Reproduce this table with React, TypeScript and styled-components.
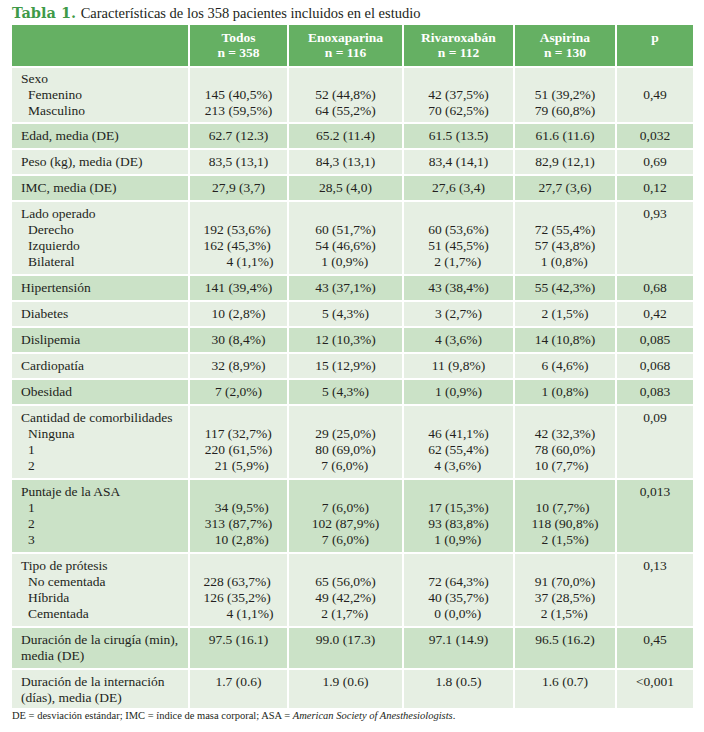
import React from 'react';
import styled, { createGlobalStyle } from 'styled-components';

const Global = createGlobalStyle`
  html, body { margin: 0; padding: 0; background: #ffffff; }
  body { font-family: "Liberation Serif", "Times New Roman", Tinos, "DejaVu Serif", serif; color: #231f20; }
`;

type Tone = 'light' | 'dark';
type VLine = [string, number?];

interface DataRow {
  label: string[];
  subs?: string[];
  tone: Tone;
  vals: VLine[][];
  p: string[];
  tight?: boolean;
}

const Page = styled.div`
  width: 704px;
  box-sizing: border-box;
  padding: 4px 0 0 12px;
  font-family: "Liberation Serif", "Times New Roman", Tinos, "DejaVu Serif", serif;
`;

const Caption = styled.div`
  font-size: 14.5px;
  line-height: 18px;
  margin-bottom: 3px;
  white-space: nowrap;
`;

const CaptionLabel = styled.span`
  color: #3f9a48;
  font-family: "DejaVu Serif", "Liberation Serif", serif;
  font-weight: bold;
  font-size: 14.5px;
  margin-right: 1px;
`;

const Table = styled.div`
  width: 681px;
  display: flex;
  flex-direction: column;
  gap: 2px;
`;

const Row = styled.div`
  display: grid;
  grid-template-columns: 176px 97px 113px 109px 100px 76px;
  column-gap: 2px;
`;

const HeadCell = styled.div`
  background: #65b063;
  color: #ffffff;
  font-weight: bold;
  font-size: 13.5px;
  line-height: 15px;
  text-align: center;
  padding: 5px 4px 6px;
`;

const Cell = styled.div<{ $tone: Tone; $label?: boolean; $tight?: boolean; $last?: boolean }>`
  background: ${(p) => (p.$tone === 'dark' ? '#cbe2c7' : '#e6efe3')};
  font-size: 13.5px;
  line-height: 16px;
  padding: ${(p) => (p.$tight ? '3px' : '4px')} 4px
    ${(p) => (p.$last ? '2px' : p.$tight ? '3px' : '4px')}
    ${(p) => (p.$label ? '9px' : '4px')};
  text-align: ${(p) => (p.$label ? 'left' : 'center')};
  white-space: nowrap;
`;

const SubItem = styled.div`
  padding-left: 7px;
`;

const Stack = styled.div`
  display: inline-block;
  text-align: left;
`;

const VLineBox = styled.div<{ $pad: number }>`
  padding-left: ${(p) => p.$pad}px;
  min-height: 16px;
`;

const Footnote = styled.div`
  font-size: 10.5px;
  line-height: 14px;
  margin-top: 1px;
  white-space: nowrap;
`;

const headers: string[][] = [
  [],
  ['Todos', 'n = 358'],
  ['Enoxaparina', 'n = 116'],
  ['Rivaroxabán', 'n = 112'],
  ['Aspirina', 'n = 130'],
  ['p'],
];

const rows: DataRow[] = [
  {
    label: ['Sexo'],
    subs: ['Femenino', 'Masculino'],
    tone: 'light',
    tight: true,
    vals: [
      [['145 (40,5%)'], ['213 (59,5%)']],
      [['52 (44,8%)'], ['64 (55,2%)']],
      [['42 (37,5%)'], ['70 (62,5%)']],
      [['51 (39,2%)'], ['79 (60,8%)']],
    ],
    p: ['', '0,49'],
  },
  { label: ['Edad, media (DE)'], tone: 'dark', vals: [[['62.7 (12.3)']], [['65.2 (11.4)']], [['61.5 (13.5)']], [['61.6 (11.6)']]], p: ['0,032'] },
  { label: ['Peso (kg), media (DE)'], tone: 'light', vals: [[['83,5 (13,1)']], [['84,3 (13,1)']], [['83,4 (14,1)']], [['82,9 (12,1)']]], p: ['0,69'] },
  { label: ['IMC, media (DE)'], tone: 'dark', vals: [[['27,9 (3,7)']], [['28,5 (4,0)']], [['27,6 (3,4)']], [['27,7 (3,6)']]], p: ['0,12'] },
  {
    label: ['Lado operado'],
    subs: ['Derecho', 'Izquierdo', 'Bilateral'],
    tone: 'light',
    vals: [
      [['192 (53,6%)'], ['162 (45,3%)'], ['4 (1,1%)', 23]],
      [['60 (51,7%)'], ['54 (46,6%)'], ['1 (0,9%)', 6]],
      [['60 (53,6%)'], ['51 (45,5%)'], ['2 (1,7%)', 6]],
      [['72 (55,4%)'], ['57 (43,8%)'], ['1 (0,8%)', 6]],
    ],
    p: ['0,93'],
  },
  { label: ['Hipertensión'], tone: 'dark', vals: [[['141 (39,4%)']], [['43 (37,1%)']], [['43 (38,4%)']], [['55 (42,3%)']]], p: ['0,68'] },
  { label: ['Diabetes'], tone: 'light', vals: [[['10 (2,8%)']], [['5 (4,3%)']], [['3 (2,7%)']], [['2 (1,5%)']]], p: ['0,42'] },
  { label: ['Dislipemia'], tone: 'dark', vals: [[['30 (8,4%)']], [['12 (10,3%)']], [['4 (3,6%)']], [['14 (10,8%)']]], p: ['0,085'] },
  { label: ['Cardiopatía'], tone: 'light', vals: [[['32 (8,9%)']], [['15 (12,9%)']], [['11 (9,8%)']], [['6 (4,6%)']]], p: ['0,068'] },
  { label: ['Obesidad'], tone: 'dark', vals: [[['7 (2,0%)']], [['5 (4,3%)']], [['1 (0,9%)']], [['1 (0,8%)']]], p: ['0,083'] },
  {
    label: ['Cantidad de comorbilidades'],
    subs: ['Ninguna', '1', '2'],
    tone: 'light',
    vals: [
      [['117 (32,7%)'], ['220 (61,5%)'], ['21 (5,9%)', 10]],
      [['29 (25,0%)'], ['80 (69,0%)'], ['7 (6,0%)', 6]],
      [['46 (41,1%)'], ['62 (55,4%)'], ['4 (3,6%)', 6]],
      [['42 (32,3%)'], ['78 (60,0%)'], ['10 (7,7%)']],
    ],
    p: ['0,09'],
  },
  {
    label: ['Puntaje de la ASA'],
    subs: ['1', '2', '3'],
    tone: 'dark',
    vals: [
      [['34 (9,5%)', 10], ['313 (87,7%)'], ['10 (2,8%)', 10]],
      [['7 (6,0%)', 10], ['102 (87,9%)'], ['7 (6,0%)', 10]],
      [['17 (15,3%)'], ['93 (83,8%)'], ['1 (0,9%)', 6]],
      [['10 (7,7%)', 4], ['118 (90,8%)'], ['2 (1,5%)', 10]],
    ],
    p: ['0,013'],
  },
  {
    label: ['Tipo de prótesis'],
    subs: ['No cementada', 'Híbrida', 'Cementada'],
    tone: 'light',
    vals: [
      [['228 (63,7%)'], ['126 (35,2%)'], ['4 (1,1%)', 23]],
      [['65 (56,0%)'], ['49 (42,2%)'], ['2 (1,7%)', 6]],
      [['72 (64,3%)'], ['40 (35,7%)'], ['0 (0,0%)', 6]],
      [['91 (70,0%)'], ['37 (28,5%)'], ['2 (1,5%)', 6]],
    ],
    p: ['0,13'],
  },
  {
    label: ['Duración de la cirugía (min),', 'media (DE)'],
    tone: 'dark',
    vals: [[['97.5 (16.1)']], [['99.0 (17.3)']], [['97.1 (14.9)']], [['96.5 (16.2)']]],
    p: ['0,45'],
  },
  {
    label: ['Duración de la internación', '(días), media (DE)'],
    tone: 'light',
    vals: [[['1.7 (0.6)']], [['1.9 (0.6)']], [['1.8 (0.5)']], [['1.6 (0.7)']]],
    p: ['<0,001'],
  },
];

const ValueStack: React.FC<{ lines: VLine[]; lead: boolean }> = ({ lines, lead }) => (
  <Stack>
    {lead && <VLineBox $pad={0}>{'\u00a0'}</VLineBox>}
    {lines.map(([t, pad], i) => (
      <VLineBox key={i} $pad={pad ?? 0}>
        {t}
      </VLineBox>
    ))}
  </Stack>
);

export default function App() {
  return (
    <Page>
      <Global />
      <Caption>
        <CaptionLabel>Tabla 1.</CaptionLabel> Características de los 358 pacientes incluidos en el estudio
      </Caption>
      <Table>
        <Row>
          {headers.map((h, i) => (
            <HeadCell key={i}>
              {h.map((l, j) => (
                <div key={j}>{l}</div>
              ))}
            </HeadCell>
          ))}
        </Row>
        {rows.map((r, ri) => {
          const last = ri === rows.length - 1;
          const multi = !!r.subs;
          return (
            <Row key={ri}>
              <Cell $tone={r.tone} $label $tight={r.tight} $last={last}>
                {r.label.map((l, i) => (
                  <div key={i}>{l}</div>
                ))}
                {r.subs?.map((s, i) => (
                  <SubItem key={i}>{s}</SubItem>
                ))}
              </Cell>
              {r.vals.map((v, vi) => (
                <Cell key={vi} $tone={r.tone} $tight={r.tight} $last={last}>
                  <ValueStack lines={v} lead={multi} />
                </Cell>
              ))}
              <Cell $tone={r.tone} $tight={r.tight} $last={last}>
                {r.p.map((l, i) => (
                  <div key={i}>{l || '\u00a0'}</div>
                ))}
              </Cell>
            </Row>
          );
        })}
      </Table>
      <Footnote>
        DE = desviación estándar; IMC = índice de masa corporal; ASA = <em>American Society of Anesthesiologists</em>.
      </Footnote>
    </Page>
  );
}
